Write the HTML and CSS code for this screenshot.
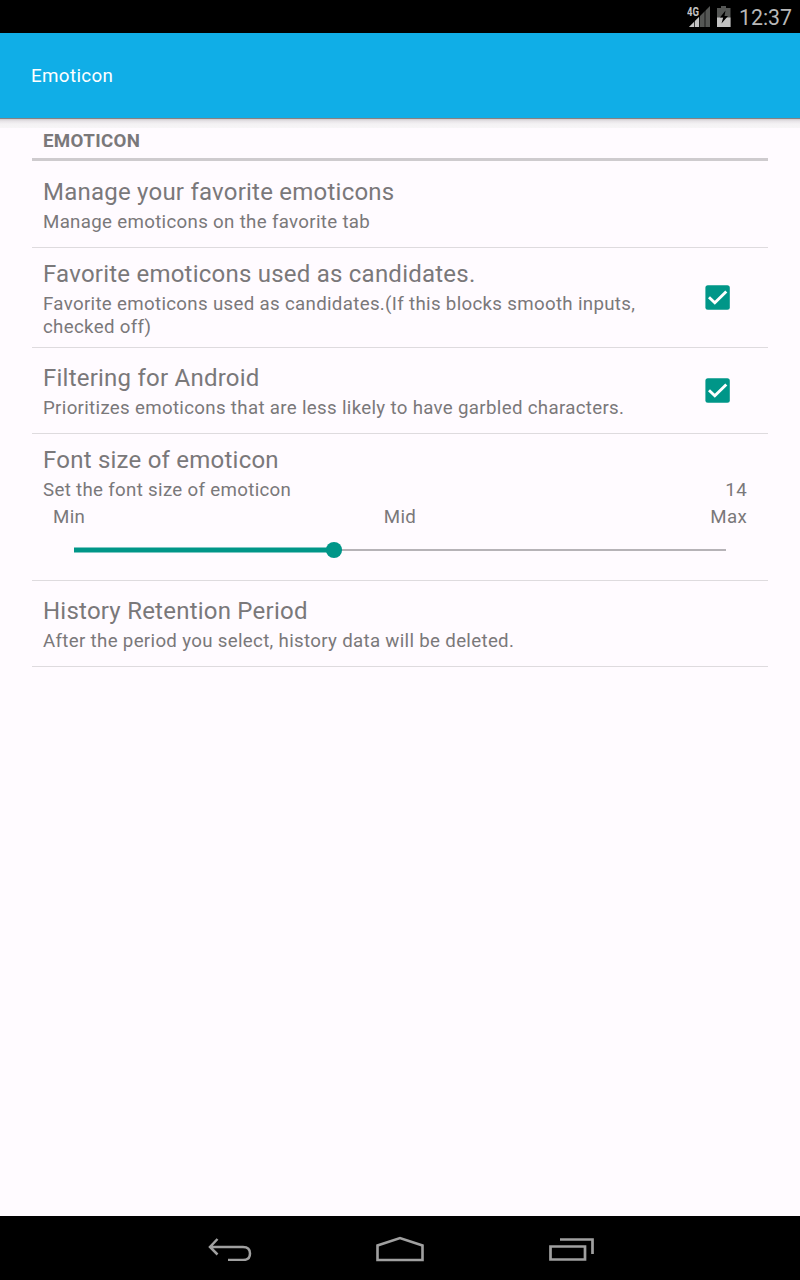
FILE: index.html
```html
<!DOCTYPE html>
<html lang="en">
<head>
<meta charset="utf-8">
<title>Emoticon</title>
<link rel="stylesheet" href="styles.css">
</head>
<body>
<div class="screen">
  <div class="status">
    <svg class="signal" width="24" height="24" viewBox="0 0 24 24">
      <path fill="#555755" d="M23 1v21H2z"/>
      <path fill="#c4c4c4" d="M12 12v10H2z"/>
      <path stroke="#000" stroke-width=".7" d="M7.500 12v12M12.500 7v17M18 3v21"/>
      <path fill="#000" d="M0 0h12.500v12H0z"/>
      <text class="net" x="0" y="10.500" textLength="12" lengthAdjust="spacingAndGlyphs">4G</text>
    </svg>
    <svg class="battery" width="16" height="24" viewBox="0 0 16 24">
      <path fill="#555755" d="M5 1h5v2h4.500v19H1V3h4z"/>
      <path fill="#c4c4c4" d="M1 12.500h13.500V22H1z"/>
      <path fill="#000" d="M9.500 5.500L4 12.500h3.200L5.500 18.500 12 11H8.500z"/>
    </svg>
    <span class="clock">12:37</span>
  </div>
  <header class="bar">Emoticon</header>
  <main class="list">
    <h2 class="category">EMOTICON</h2>
    <section class="row">
      <div><div class="title">Manage your favorite emoticons</div><div class="summary">Manage emoticons on the favorite tab</div></div>
    </section>
    <section class="row tall">
      <div><div class="title">Favorite emoticons used as candidates.</div><div class="summary">Favorite emoticons used as candidates.(If this blocks smooth inputs,<br>checked off)</div></div>
      <svg class="check" width="26" height="26" viewBox="0 0 26 26"><rect x=".4" y=".3" width="24.400" height="24.400" rx="2.500" fill="#009688"/><path d="M4 12.300l5.800 5.500L21.300 6.500" fill="none" stroke="#fff" stroke-width="2.900"/></svg>
    </section>
    <section class="row raised">
      <div><div class="title">Filtering for Android</div><div class="summary">Prioritizes emoticons that are less likely to have garbled characters.</div></div>
      <svg class="check" width="26" height="26" viewBox="0 0 26 26"><rect x=".4" y=".3" width="24.400" height="24.400" rx="2.500" fill="#009688"/><path d="M4 12.300l5.800 5.500L21.300 6.500" fill="none" stroke="#fff" stroke-width="2.900"/></svg>
    </section>
    <section class="row slider-row">
      <div class="title">Font size of emoticon</div>
      <div class="summary split"><span>Set the font size of emoticon</span><span>14</span></div>
      <div class="summary scale"><span>Min</span><span>Mid</span><span>Max</span></div>
      <svg class="slider" width="652" height="18" viewBox="0 0 652 18"><path fill="#b6b3b7" d="M260 8h392v2H260z"/><path fill="#009688" d="M0 6.600h260v4.800H0z"/><circle cx="260" cy="9" r="8.100" fill="#009688"/></svg>
    </section>
    <section class="row raised">
      <div><div class="title">History Retention Period</div><div class="summary">After the period you select, history data will be deleted.</div></div>
    </section>
  </main>
  <nav class="nav">
    <svg width="44" height="24" viewBox="0 0 44 24"><path d="M2 10H35Q42 10 42 16.500T35 23H20M9.500 2L2 10l7.500 7.500" fill="none" stroke="#a0a0a0" stroke-width="2.500"/></svg>
    <svg width="48" height="26" viewBox="0 0 48 26"><path d="M1.500 24V9.500L24 2l22.500 7.500V24z" fill="none" stroke="#a0a0a0" stroke-width="2.600"/></svg>
    <svg width="46" height="24" viewBox="0 0 46 24"><path d="M2.500 9.500H37v13H2.500zM12 2.500h32.500V17" fill="none" stroke="#a0a0a0" stroke-width="2.700"/></svg>
  </nav>
</div>
</body>
</html>
```
FILE: styles.css
```css
* { box-sizing: border-box; }
body { margin: 0; font-family: Roboto, "Liberation Sans", sans-serif; }
.screen { width: 800px; height: 1280px; display: flex; flex-direction: column; background: #fffbff; color: #7a787a; }
.status { height: 33px; background: #000; display: flex; align-items: center; justify-content: flex-end; padding-right: 8px; flex: none; }
.signal { margin: 0 5px 0 0; }
.battery { margin-right: 7px; }
.net { font-size: 12px; font-weight: 700; fill: #c4c4c4; }
.clock { font-size: 21.3px; color: #b8b8b8; line-height: 33px; padding-top: 2px; }
.bar { height: 86px; flex: none; background: #10aee7; color: #fff; font-size: 18.8px; line-height: 87px; padding-left: 31px; letter-spacing: .35px; border-bottom: 1px solid #848284; }
.list { flex: 1; padding: 0 32px; background: linear-gradient(#cecbce, #e7e3e7 2px, #f4f2f4 5px, #f7f5f7 9px, #fffbff 9px); }
.category { height: 42px; margin: 0; padding: 10px 11px 0; font-size: 18.7px; line-height: 24px; letter-spacing: .35px; font-weight: 700; border-bottom: 3px solid #cecbce; }
.row { height: 86px; border-bottom: 1px solid #dedbde; padding: 0 21px 0 11px; display: flex; align-items: center; justify-content: space-between; }
.row:first-of-type { height: 87px; }
.raised .title { margin-top: -2px; }
.tall { height: 100px; }
.title { font-size: 24px; line-height: 37px; letter-spacing: .23px; white-space: nowrap; }
.summary { font-size: 18.7px; line-height: 23px; letter-spacing: .32px; white-space: nowrap; }
.check { margin-right: 16px; }
.slider-row { height: 147px; display: block; padding-top: 8px; }
.split { display: flex; justify-content: space-between; }
.scale { display: grid; grid-template-columns: 1fr auto 1fr; padding: 4px 0 0 10px; }
.scale span:last-child { text-align: right; }
.slider { display: block; margin: 12px 0 0 31px; }
.nav { height: 64px; flex: none; background: #000; display: flex; padding: 2px 0 0 208px; align-items: center; }
.nav svg + svg { margin-left: 124px; }
```
